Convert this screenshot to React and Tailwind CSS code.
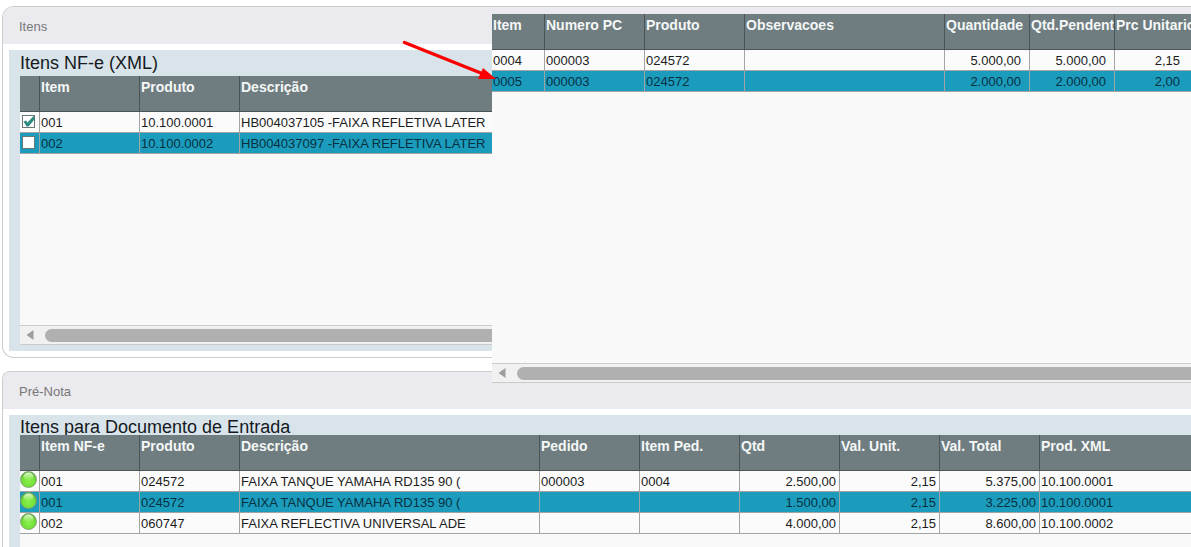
import { useState } from 'react';
import clsx from 'clsx';

const xmlColumns = [
  { key: 'item', label: 'Item', width: 'w-[100px]' },
  { key: 'produto', label: 'Produto', width: 'w-[100px]' },
  { key: 'descricao', label: 'Descrição' }
];

const xmlRows = [
  { item: '001', produto: '10.100.0001', descricao: 'HB004037105 -FAIXA REFLETIVA LATER', checked: true },
  { item: '002', produto: '10.100.0002', descricao: 'HB004037097 -FAIXA REFLETIVA LATER', checked: false }
];

const orderColumns = [
  { key: 'item', label: 'Item', width: 'w-[52px]' },
  { key: 'pedido', label: 'Numero PC', width: 'w-[100px]' },
  { key: 'produto', label: 'Produto', width: 'w-[100px]' },
  { key: 'obs', label: 'Observacoes', width: 'w-[200px]' },
  { key: 'quantidade', label: 'Quantidade', width: 'w-[85px]', align: 'text-right pr-2' },
  { key: 'pendente', label: 'Qtd.Pendent', width: 'w-[85px]', align: 'text-right pr-2' },
  { key: 'preco', label: 'Prc Unitario', align: 'text-right pr-[11px]' }
];

const orderRows = [
  { item: '0004', pedido: '000003', produto: '024572', obs: '', quantidade: '5.000,00', pendente: '5.000,00', preco: '2,15' },
  { item: '0005', pedido: '000003', produto: '024572', obs: '', quantidade: '2.000,00', pendente: '2.000,00', preco: '2,00' }
];

const entryColumns = [
  { key: 'item', label: 'Item NF-e', width: 'w-[100px]' },
  { key: 'produto', label: 'Produto', width: 'w-[100px]' },
  { key: 'descricao', label: 'Descrição', width: 'w-[300px]' },
  { key: 'pedido', label: 'Pedido', width: 'w-[100px]' },
  { key: 'itemPed', label: 'Item Ped.', width: 'w-[100px]' },
  { key: 'qtd', label: 'Qtd', width: 'w-[100px]', align: 'text-right pr-[3px]' },
  { key: 'unit', label: 'Val. Unit.', width: 'w-[100px]', align: 'text-right pr-[3px]' },
  { key: 'total', label: 'Val. Total', width: 'w-[100px]', align: 'text-right pr-[3px]' },
  { key: 'prodXml', label: 'Prod. XML' }
];

const entryRows = [
  { item: '001', produto: '024572', descricao: 'FAIXA TANQUE YAMAHA RD135 90 (', pedido: '000003', itemPed: '0004', qtd: '2.500,00', unit: '2,15', total: '5.375,00', prodXml: '10.100.0001' },
  { item: '001', produto: '024572', descricao: 'FAIXA TANQUE YAMAHA RD135 90 (', pedido: '', itemPed: '', qtd: '1.500,00', unit: '2,15', total: '3.225,00', prodXml: '10.100.0001' },
  { item: '002', produto: '060747', descricao: 'FAIXA REFLECTIVA UNIVERSAL ADE', pedido: '', itemPed: '', qtd: '4.000,00', unit: '2,15', total: '8.600,00', prodXml: '10.100.0002' }
];

function DataGrid({ label, columns, rows, selected, renderMarker }) {
  return (
    <table aria-label={label} className="w-full table-fixed border-separate border-spacing-0 text-[13px] leading-4">
      <colgroup>
        {renderMarker && <col className="w-[19px]" />}
        {columns.map((col) => (
          <col key={col.key} className={col.width} />
        ))}
      </colgroup>
      <thead>
        <tr className="h-9 bg-[#6f7d80] text-left align-top text-sm leading-4 text-[#f4f7f7]">
          {renderMarker && <th className="border-b border-[#4b5457] p-0" />}
          {columns.map((col, i) => (
            <th
              key={col.key}
              className={clsx(
                'overflow-hidden border-b border-[#4b5457] pt-[3px] pr-0 pb-0 pl-px font-bold whitespace-nowrap',
                (i > 0 || renderMarker) && 'border-l'
              )}
            >
              {col.label}
            </th>
          ))}
        </tr>
      </thead>
      <tbody>
        {rows.map((row, r) => (
          <tr key={r} className={clsx('h-[21px]', r === selected ? 'bg-[#1c9cbd] text-[#06303f]' : 'bg-[#fbfbfb] text-[#1c1c1c]')}>
            {renderMarker && <td className="border-b border-[#a3a3a3] p-0 align-top">{renderMarker(row, r)}</td>}
            {columns.map((col, i) => (
              <td
                key={col.key}
                className={clsx(
                  'overflow-hidden border-b border-[#a3a3a3] pt-0.5 pb-0 pl-px whitespace-nowrap',
                  (i > 0 || renderMarker) && 'border-l',
                  col.align
                )}
              >
                {row[col.key]}
              </td>
            ))}
          </tr>
        ))}
      </tbody>
    </table>
  );
}

function ScrollBar() {
  return (
    <div className="flex h-5 shrink-0 items-center gap-[11px] border-y border-[#cbcbcb] bg-[#f1f1f1] pl-1.5">
      <button type="button" aria-label="Rolar para a esquerda" className="flex h-4 w-2 items-center justify-center">
        <svg viewBox="0 0 8 10" className="h-2.5 w-2">
          <path d="M7.5 0v10L0.5 5z" fill="#9d9d9d" />
        </svg>
      </button>
      <div className="h-[13px] flex-1 rounded-l-full bg-[#b0b0b0]" />
    </div>
  );
}

function Panel({ title, heading, className, headingClass, children }) {
  return (
    <section className={clsx('ml-0.5 flex flex-col overflow-hidden border border-r-0 border-[#cdcdcf] bg-white', className)}>
      <header className="flex h-[37px] shrink-0 items-center bg-[#eaeaef] pt-0.5 pl-4 text-[13px] text-[#777777]">
        <h2>{title}</h2>
      </header>
      <div className="ml-1.5 mt-1.5 flex flex-1 flex-col bg-[#d8e4ea] pl-[11px]">
        <h3 className={clsx('shrink-0 text-lg leading-6 text-[#16191d]', headingClass)}>{heading}</h3>
        {children}
      </div>
    </section>
  );
}

function RowCheck({ label, checked, onChange }) {
  return (
    <span className="relative mt-[3px] ml-0.5 flex size-[13px]">
      <input
        type="checkbox"
        aria-label={label}
        checked={checked}
        onChange={onChange}
        className="size-[13px] appearance-none border border-[#69767a] bg-white"
      />
      {checked && (
        <svg viewBox="0 0 13 13" className="pointer-events-none absolute inset-0 size-[13px]">
          <path d="M1.500 6.500 4.200 5.500 5.500 7.500 11.500 1 12.500 2v2.500L6.500 11.500H4.500z" fill="#2f8c83" />
        </svg>
      )}
    </span>
  );
}

function StatusBall() {
  return (
    <svg viewBox="0 0 18 18" role="img" aria-label="Liberado" className="-mb-px size-[18px]">
      <defs>
        <radialGradient id="ball" cx="50%" cy="58%" r="55%">
          <stop offset="0" stopColor="#8af04a" />
          <stop offset="0.7" stopColor="#74e03a" />
          <stop offset="1" stopColor="#5aa83a" />
        </radialGradient>
        <linearGradient id="gloss" x1="0" y1="0" x2="0" y2="1">
          <stop offset="0" stopColor="#f2ffe8" stopOpacity="0.9" />
          <stop offset="1" stopColor="#b8f58f" stopOpacity="0.2" />
        </linearGradient>
      </defs>
      <circle cx="8.5" cy="8.5" r="8" fill="url(#ball)" stroke="#7f9f72" strokeWidth="0.8" />
      <ellipse cx="8.5" cy="5.2" rx="5" ry="3.6" fill="url(#gloss)" />
    </svg>
  );
}

export default function App() {
  const [checks, setChecks] = useState(xmlRows.map((row) => row.checked));

  const toggle = (index) => setChecks(checks.map((c, i) => (i === index ? !c : c)));

  return (
    <main className="relative flex min-h-screen flex-col overflow-hidden bg-white pt-1.5 font-['Liberation_Sans',Arial,sans-serif]">
      <Panel title="Itens" heading="Itens NF-e (XML)" className="rounded-l-xl pb-1.5" headingClass="h-[26px] pt-px">
        <div className="mb-1.5 flex flex-col bg-[#f9f9f9]">
          <div className="min-h-[249px]">
            <DataGrid
              label="Itens NF-e (XML)"
              columns={xmlColumns}
              rows={xmlRows}
              selected={1}
              renderMarker={(row, i) => (
                <RowCheck label={`Selecionar item ${row.item}`} checked={checks[i]} onChange={() => toggle(i)} />
              )}
            />
          </div>
          <ScrollBar />
        </div>
      </Panel>

      <Panel
        title="Pré-Nota"
        heading="Itens para Documento de Entrada"
        className="mt-[13px] flex-1 rounded-tl-lg border-b-0"
        headingClass="h-5"
      >
        <div className="flex-1 bg-[#f9f9f9]">
          <DataGrid
            label="Itens para Documento de Entrada"
            columns={entryColumns}
            rows={entryRows}
            selected={1}
            renderMarker={() => <StatusBall />}
          />
        </div>
      </Panel>

      {/* Purchase order window floating over both panels */}
      <aside className="absolute top-3.5 right-0 left-[492px] flex flex-col rounded-tl-sm bg-[#f9f9f9]">
        <div className="min-h-[349px]">
          <DataGrid label="Pedidos de compra" columns={orderColumns} rows={orderRows} selected={1} />
        </div>
        <ScrollBar />
      </aside>

      <svg viewBox="0 0 96 42" className="pointer-events-none absolute top-10 left-[401px] h-[42px] w-24" aria-hidden="true">
        <path d="M3.500 2.500 81 33.500" stroke="#fb0000" strokeWidth="3.500" strokeLinecap="round" />
        <path d="M82 28 95 39 77 39z" fill="#fb0000" />
      </svg>
    </main>
  );
}
